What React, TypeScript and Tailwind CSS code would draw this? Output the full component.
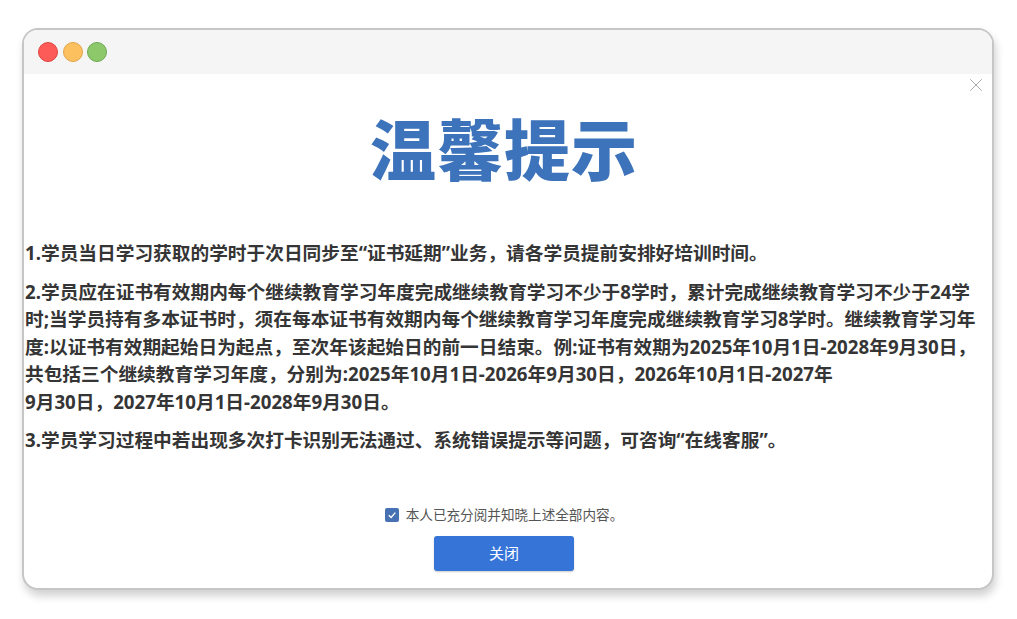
import { X } from 'lucide-react'

const cjk = { fontFamily: '"Noto Sans CJK SC", "Noto Sans", sans-serif' }
const body = { fontFamily: '"Noto Sans", "Noto Sans CJK SC", sans-serif' }

export default function App() {
  return (
    <div className="w-full h-[619px] bg-white pt-[28px] pl-[22px]" style={cjk}>
      <div className="w-[972px] h-[562px] rounded-[16px] border-2 border-[#c6c6c6] bg-white overflow-hidden shadow-[2px_6px_8px_rgba(0,0,0,0.18)] flex flex-col">
        {/* title bar */}
        <div className="h-[44px] shrink-0 bg-[#f5f5f5] flex items-center gap-[4.5px] pl-[14px]">
          <span className="w-[20px] h-[20px] rounded-full bg-[#fd5b57] border border-[#dc4541]" />
          <span className="w-[20px] h-[20px] rounded-full bg-[#fdc05e] border border-[#dea34a]" />
          <span className="w-[20px] h-[20px] rounded-full bg-[#8dc96a] border border-[#6ea653]" />
        </div>

        <div className="relative flex-1 flex flex-col">
          <button className="absolute top-[0px] right-[5px] text-[#999]">
            <X size={22} strokeWidth={0.9} />
          </button>

          <h1 className="mt-[38px] text-center text-[66px] leading-[68px] font-black text-[#3d73ba] pr-[8px] tracking-[1px]">
            温馨提示
          </h1>

          <div className="mt-[59px] pl-[1px] text-[18.7px] leading-[27.5px] font-bold text-[#353535] whitespace-nowrap" style={body}>
            <p className="mb-[11px]">1.学员当日学习获取的学时于次日同步至“证书延期”业务，请各学员提前安排好培训时间。</p>
            <p className="mb-[11px]">
              2.学员应在证书有效期内每个继续教育学习年度完成继续教育学习不少于8学时，累计完成继续教育学习不少于24学
              <br />
              时;当学员持有多本证书时，须在每本证书有效期内每个继续教育学习年度完成继续教育学习8学时。继续教育学习年
              <br />
              度:以证书有效期起始日为起点，至次年该起始日的前一日结束。例:证书有效期为2025年10月1日-2028年9月30日，
              <br />
              共包括三个继续教育学习年度，分别为:2025年10月1日-2026年9月30日，2026年10月1日-2027年
              <br />
              9月30日，2027年10月1日-2028年9月30日。
            </p>
            <p>3.学员学习过程中若出现多次打卡识别无法通过、系统错误提示等问题，可咨询“在线客服”。</p>
          </div>

          <div className="mt-[51px] flex flex-col items-center pr-[8px]">
            <label className="flex items-center gap-[4px] h-[20px]">
              <span className="w-[14px] h-[14px] rounded-[2px] bg-[#4771b3] flex items-center justify-center">
                <svg width="10" height="10" viewBox="0 0 10 10" fill="none">
                  <path d="M1.8 5.2 L4.1 7.4 L8.3 2.6" stroke="white" strokeWidth="1.4" />
                </svg>
              </span>
              <span className="ml-[3px] text-[13.6px] text-[#555]">本人已充分阅并知晓上述全部内容。</span>
            </label>
            <button className="mt-[11px] w-[140px] h-[35px] rounded-[3px] bg-[#3674d8] text-white text-[15px] shadow-[0_1px_2px_rgba(0,0,0,0.2)]">
              关闭
            </button>
          </div>
        </div>
      </div>
    </div>
  )
}
